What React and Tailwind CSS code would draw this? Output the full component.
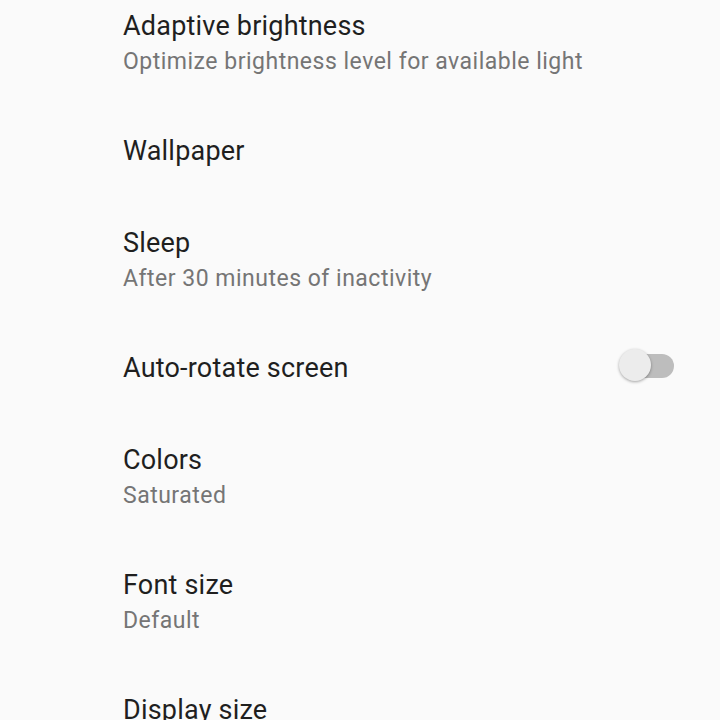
import React from 'react'

const items = [
  { title: 'Adaptive brightness', summary: 'Optimize brightness level for available light' },
  { title: 'Wallpaper' },
  { title: 'Sleep', summary: 'After 30 minutes of inactivity' },
  { title: 'Auto-rotate screen', toggle: true },
  { title: 'Colors', summary: 'Saturated' },
  { title: 'Font size', summary: 'Default' },
  { title: 'Display size' },
]

const Toggle = () => (
  <div className="relative w-[56px] h-[36px] -translate-y-[2px] flex items-center shrink-0">
    <div className="w-[50px] h-[24px] ml-[6px] rounded-full bg-[#bdbdbd]" />
    <div className="absolute left-[1px] top-[1px] w-[32px] h-[32px] rounded-full bg-[#ececec] shadow-[0_1px_3px_rgba(0,0,0,0.35)]" />
  </div>
)

const SettingItem = ({ title, summary, toggle }) => (
  <div className="flex items-center min-h-[92px] pl-[123px] pr-[46px] py-[27px]">
    <div className="flex-1 min-w-0">
      <div className="text-[27px] leading-[38px] tracking-[0.2px] text-[#1f1f1f]">{title}</div>
      {summary && <div className="text-[23px] leading-[33px] tracking-[0.5px] text-[#757575]">{summary}</div>}
    </div>
    {toggle && <Toggle />}
  </div>
)

export default function App() {
  return (
    <div className="w-[720px] h-[720px] overflow-hidden bg-[#fafafa]" style={{ fontFamily: 'Roboto, "Noto Sans", sans-serif' }}>
      <div className="-mt-[20px]">
        {items.map((it) => (
          <SettingItem key={it.title} {...it} />
        ))}
      </div>
    </div>
  )
}
